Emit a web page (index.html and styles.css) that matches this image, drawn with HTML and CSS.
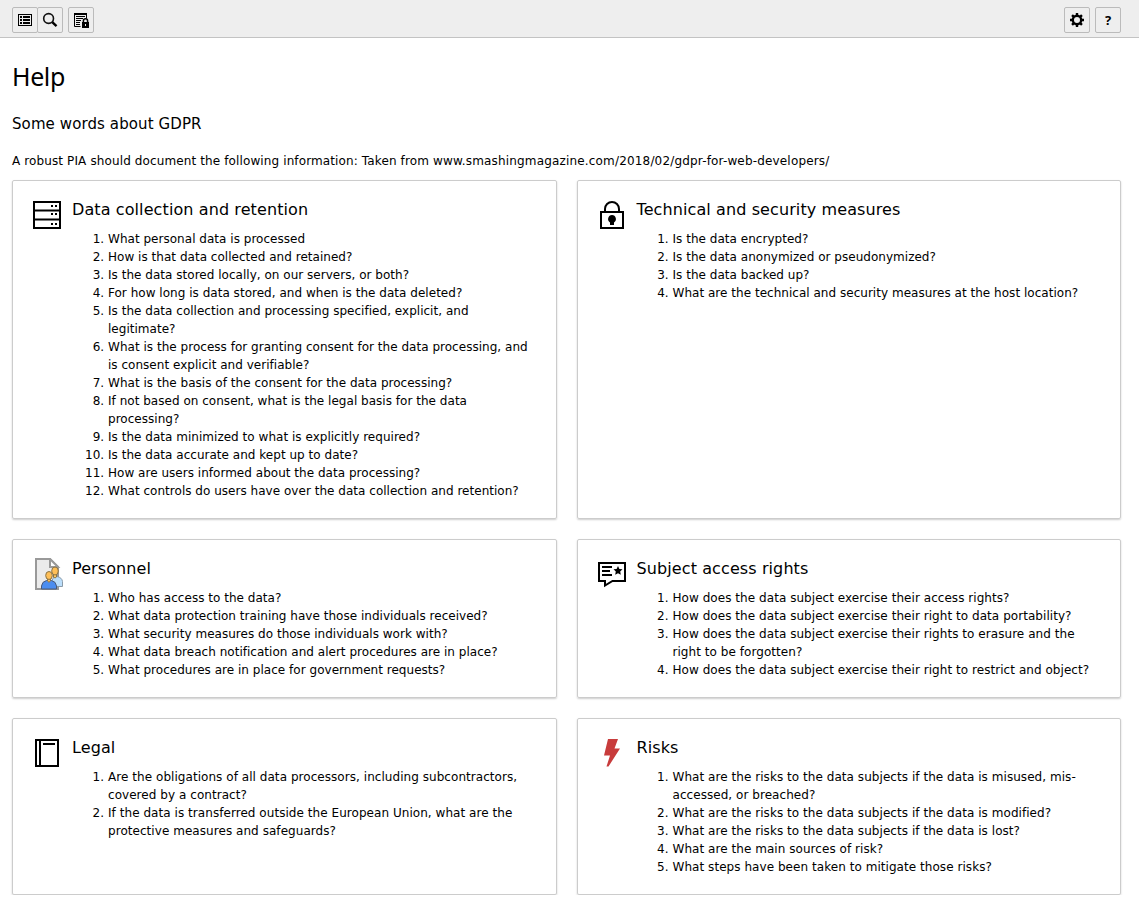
FILE: index.html
```html
<!DOCTYPE html>
<html lang="en">
<head>
<meta charset="utf-8">
<title>Help</title>
<link rel="stylesheet" href="styles.css">
</head>
<body>
<header class="toolbar">
  <div class="group">
    <button class="btn" aria-label="List"><svg width="16" height="16" viewBox="0 0 16 16" shape-rendering="crispEdges"><path fill="none" stroke="#000" stroke-width="1" d="M1.5 2.5h13v11h-13z"/><path d="M3 4h2v2H3zM6 4h7v2H6zM3 7h2v2H3zM6 7h7v2H6zM3 10h2v2H3zM6 10h7v2H6z"/></svg></button>
    <button class="btn" aria-label="Search"><svg width="16" height="16" viewBox="0 0 16 16"><circle cx="6.6" cy="6.5" r="4.9" fill="none" stroke="#111" stroke-width="1.6"/><path d="M10.3 10.2l4.2 3.9" stroke="#000" stroke-width="2.4"/></svg></button>
  </div>
  <div class="group">
    <button class="btn" aria-label="Privacy"><svg width="16" height="16" viewBox="0 0 16 16"><path d="M7.5 14.5h-6v-13h12v5" fill="none" stroke="#000"/><path d="M1 1h13v2H1zM3 4h9v1H3zM3 6h7v1H3zM3 8h5v1H3zM3 10h4v1H3zM3 12h4v1H3z"/><path d="M9 10h7v6H9z"/><path d="M10.400 10V8.900a2.100 2.100 0 0 1 4.200 0V10" fill="none" stroke="#000" stroke-width="1.500"/><path fill="#eee" d="M12 12h1v2h-1z"/></svg></button>
  </div>
  <div class="group push">
    <button class="btn" aria-label="Settings"><svg width="16" height="16" viewBox="0 0 16 16"><circle cx="8" cy="8" r="4.2" fill="none" stroke="#000" stroke-width="2.4"/><path d="M8 1v2.5M8 12.5V15M1 8h2.5M12.5 8H15M3.05 3.05l1.8 1.8M11.15 11.15l1.8 1.8M3.05 12.95l1.8-1.8M11.15 4.85l1.8-1.8" stroke="#000" stroke-width="2.4"/></svg></button>
  </div>
  <div class="group"><button class="btn help">?</button></div>
</header>
<main class="page">
  <h1>Help</h1>
  <h2>Some words about GDPR</h2>
  <p class="intro">A robust PIA should document the following information: Taken from <span class="url">www.smashingmagazine.com/2018/02/gdpr-for-web-developers/</span></p>
  <div class="cards">
    <section class="card">
      <svg class="icon" width="32" height="32" viewBox="0 0 32 32"><path d="M2 3h26v26H2zM2 11.5h26M2 20.5h26" fill="none" stroke="#000" stroke-width="2"/><path d="M19 6h2v2h-2zM23 6h2v2h-2zM19 14h2v2h-2zM23 14h2v2h-2zM19 24h2v2h-2zM23 24h2v2h-2z"/></svg>
      <div class="body">
      <h3>Data collection and retention</h3>
      <ol>
        <li>What personal data is processed</li>
        <li>How is that data collected and retained?</li>
        <li>Is the data stored locally, on our servers, or both?</li>
        <li>For how long is data stored, and when is the data deleted?</li>
        <li>Is the data collection and processing specified, explicit, and<br>legitimate?</li>
        <li>What is the process for granting consent for the data processing, and<br>is consent explicit and verifiable?</li>
        <li>What is the basis of the consent for the data processing?</li>
        <li>If not based on consent, what is the legal basis for the data<br>processing?</li>
        <li>Is the data minimized to what is explicitly required?</li>
        <li>Is the data accurate and kept up to date?</li>
        <li>How are users informed about the data processing?</li>
        <li>What controls do users have over the data collection and retention?</li>
      </ol>
      </div>
    </section>
    <section class="card">
      <svg class="icon" width="32" height="32" viewBox="0 0 32 32"><path d="M4 13h22v16H4z" fill="none" stroke="#000" stroke-width="2"/><path d="M8 13v-3a7 7 0 0 1 14 0v3" fill="none" stroke="#000" stroke-width="2"/><path d="M15 16a4 4 0 0 1 2 7.400V26h-4v-2.600a4 4 0 0 1 2-7.400z"/></svg>
      <div class="body">
      <h3>Technical and security measures</h3>
      <ol>
        <li>Is the data encrypted?</li>
        <li>Is the data anonymized or pseudonymized?</li>
        <li>Is the data backed up?</li>
        <li>What are the technical and security measures at the host location?</li>
      </ol>
      </div>
    </section>
    <section class="card">
      <svg class="icon" width="32" height="32" viewBox="0 0 32 32"><path d="M4 1h14l8 8v22H4z" fill="#ebebeb" stroke="#999" stroke-width="2"/><path d="M18 1v8h8z" fill="#fff" stroke="#999" stroke-width="2"/><path d="M20 28.500v-6l2-4h3q5 1 5.500 5v5z" fill="#bbdefb" stroke="#8a9aa8"/><path d="M21.500 15h3v4q-1.500 2-3 0z" fill="#ffca61" stroke="#8a7345"/><ellipse cx="23" cy="13" rx="3.300" ry="4" fill="#ffbf57" stroke="#8a7345"/><path d="M9.500 31v-3q.5-4.500 5-5.500h5q4.500 1 5 5.500v3z" fill="#4b8df0" stroke="#4a5a78"/><path d="M15.500 19.500h3v3.500q-1.500 2.500-3 0z" fill="#ffbf57" stroke="#8a7345"/><ellipse cx="17" cy="17.500" rx="3.300" ry="4" fill="#ffbf57" stroke="#8a7345"/></svg>
      <div class="body">
      <h3>Personnel</h3>
      <ol>
        <li>Who has access to the data?</li>
        <li>What data protection training have those individuals received?</li>
        <li>What security measures do those individuals work with?</li>
        <li>What data breach notification and alert procedures are in place?</li>
        <li>What procedures are in place for government requests?</li>
      </ol>
      </div>
    </section>
    <section class="card">
      <svg class="icon" width="32" height="32" viewBox="0 0 32 32"><path d="M2 5h26v18H15.500L8 27.500V23H2z" fill="none" stroke="#000" stroke-width="2"/><path d="M5 8h10v2H5zM5 12h8v2H5zM5 16h10v2H5z"/><path d="M21 8l1.400 2.900 3.100.4-2.300 2.200.6 3.300-2.800-1.600-2.800 1.600.6-3.300-2.300-2.200 3.100-.4z"/></svg>
      <div class="body">
      <h3>Subject access rights</h3>
      <ol class="wide">
        <li>How does the data subject exercise their access rights?</li>
        <li>How does the data subject exercise their right to data portability?</li>
        <li>How does the data subject exercise their rights to erasure and the<br>right to be forgotten?</li>
        <li>How does the data subject exercise their right to restrict and object?</li>
      </ol>
      </div>
    </section>
    <section class="card">
      <svg class="icon" width="32" height="32" viewBox="0 0 32 32"><path d="M4 3h22v26H4zM8 3v26M11 7h12" fill="none" stroke="#000" stroke-width="2"/></svg>
      <div class="body">
      <h3>Legal</h3>
      <ol class="wide">
        <li>Are the obligations of all data processors, including subcontractors,<br>covered by a contract?</li>
        <li>If the data is transferred outside the European Union, what are the<br>protective measures and safeguards?</li>
      </ol>
      </div>
    </section>
    <section class="card">
      <svg class="icon" width="32" height="32" viewBox="0 0 32 32"><path d="M11 2h10l-3.500 9.500H23L11.500 29.500H9.500L13 18.500H7z" fill="#c83c3c"/></svg>
      <div class="body">
      <h3>Risks</h3>
      <ol class="wide">
        <li>What are the risks to the data subjects if the data is misused, mis-<br>accessed, or breached?</li>
        <li>What are the risks to the data subjects if the data is modified?</li>
        <li>What are the risks to the data subjects if the data is lost?</li>
        <li>What are the main sources of risk?</li>
        <li>What steps have been taken to mitigate those risks?</li>
      </ol>
      </div>
    </section>
  </div>
</main>
</body>
</html>
```
FILE: styles.css
```css
* { box-sizing: border-box; }
body { margin: 0; background: #fff; color: #000; font: 12px/18px Verdana, "DejaVu Sans", sans-serif; }
.toolbar { display: flex; gap: 5px; height: 38px; padding: 7px 18px 0 12px; background: #eee; border-bottom: 1px solid #c3c3c3; }
.group { display: flex; height: 26px; }
.push { margin-left: auto; }
.btn { display: flex; align-items: center; justify-content: center; width: 26px; height: 26px; padding: 0; border: 1px solid #bbb; border-radius: 2px; background: #eee; color: #000; }
.btn + .btn { margin-left: -1px; }
.help { font: bold 13px/1 "Noto Sans", sans-serif; }
.page { padding: 22px 18px 0 12px; }
h1, h2, h3 { margin: 0; font-weight: 400; }
h1 { font: 400 25px/32px "Noto Sans", sans-serif; letter-spacing: -.4px; }
h2 { margin-top: 22px; font-size: 15px; line-height: 20px; letter-spacing: .1px; }
.intro { margin: 18px 0 10px; white-space: nowrap; letter-spacing: .12px; }
.url { letter-spacing: .17px; }
.cards { display: grid; grid-template-columns: 1fr 1fr; gap: 20px; }
.card { display: flex; padding: 18px 0 18px 19px; border: 1px solid #ccc; border-radius: 2px; box-shadow: 0 1px 2px rgba(0,0,0,.2); }
.icon { flex: none; margin-right: 8px; }
h3 { padding-top: 1px; font-size: 16px; line-height: 20px; letter-spacing: .1px; }
ol { margin: 10px 0 0; padding-left: 36px; white-space: nowrap; letter-spacing: .025px; }
.wide { letter-spacing: .05px; }
```
